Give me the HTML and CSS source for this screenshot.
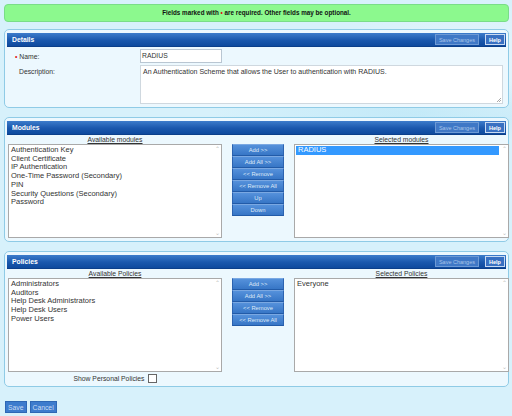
FILE: index.html
```html
<!DOCTYPE html>
<html>
<head>
<meta charset="utf-8">
<link rel="stylesheet" href="styles.css">
</head>
<body>
<div class="page">
  <div class="notice">Fields marked with <span class="req">•</span> are required. Other fields may be optional.</div>

  <div class="panel details">
    <div class="panel-head">
      <span class="title">Details</span>
      <span class="hbtn save">Save Changes</span>
      <span class="hbtn help">Help</span>
    </div>
    <div class="form-row name-row">
      <label class="flabel"><span class="req">•</span> Name:</label>
      <div class="input">RADIUS</div>
    </div>
    <div class="form-row desc-row">
      <label class="flabel">Description:</label>
      <div class="textarea">An Authentication Scheme that allows the User to authentication with RADIUS.<span class="grip"></span></div>
    </div>
  </div>

  <div class="panel modules">
    <div class="panel-head">
      <span class="title">Modules</span>
      <span class="hbtn save">Save Changes</span>
      <span class="hbtn help">Help</span>
    </div>
    <div class="picker">
      <div class="col">
        <div class="col-label">Available modules</div>
        <div class="listbox">
          <div class="items">
            <div>Authentication Key</div>
            <div>Client Certificate</div>
            <div>IP Authentication</div>
            <div>One-Time Password (Secondary)</div>
            <div>PIN</div>
            <div>Security Questions (Secondary)</div>
            <div>Password</div>
          </div>
          <div class="sbar"><span>&#8963;</span><span>&#8964;</span></div>
        </div>
      </div>
      <div class="btns">
        <div class="mbtn">Add &gt;&gt;</div>
        <div class="mbtn">Add All &gt;&gt;</div>
        <div class="mbtn">&lt;&lt; Remove</div>
        <div class="mbtn">&lt;&lt; Remove All</div>
        <div class="mbtn">Up</div>
        <div class="mbtn">Down</div>
      </div>
      <div class="col">
        <div class="col-label">Selected modules</div>
        <div class="listbox">
          <div class="items">
            <div class="sel">RADIUS</div>
          </div>
          <div class="sbar"><span>&#8963;</span><span>&#8964;</span></div>
        </div>
      </div>
    </div>
  </div>

  <div class="panel policies">
    <div class="panel-head">
      <span class="title">Policies</span>
      <span class="hbtn save">Save Changes</span>
      <span class="hbtn help">Help</span>
    </div>
    <div class="picker">
      <div class="col">
        <div class="col-label">Available Policies</div>
        <div class="listbox">
          <div class="items">
            <div>Administrators</div>
            <div>Auditors</div>
            <div>Help Desk Administrators</div>
            <div>Help Desk Users</div>
            <div>Power Users</div>
          </div>
          <div class="sbar"><span>&#8963;</span><span>&#8964;</span></div>
        </div>
        <div class="personal">Show Personal Policies <span class="check"></span></div>
      </div>
      <div class="btns">
        <div class="mbtn">Add &gt;&gt;</div>
        <div class="mbtn">Add All &gt;&gt;</div>
        <div class="mbtn">&lt;&lt; Remove</div>
        <div class="mbtn">&lt;&lt; Remove All</div>
      </div>
      <div class="col">
        <div class="col-label">Selected Policies</div>
        <div class="listbox">
          <div class="items">
            <div>Everyone</div>
          </div>
          <div class="sbar"><span>&#8963;</span><span>&#8964;</span></div>
        </div>
      </div>
    </div>
  </div>

  <div class="actions">
    <span class="abtn">Save</span>
    <span class="abtn">Cancel</span>
  </div>
</div>
</body>
</html>
```

FILE: styles.css
```css
html, body {
  margin: 0;
  padding: 0;
}
body {
  width: 512px;
  height: 416px;
  overflow: hidden;
  background: #d7f1fb;
  background-image:
    radial-gradient(ellipse 220px 90px at 470px 60px, rgba(255,255,255,0.35), rgba(255,255,255,0) 70%),
    radial-gradient(ellipse 260px 40px at 420px 112px, rgba(180,228,246,0.6), rgba(180,228,246,0) 80%);
  font-family: "Liberation Sans", Arial, sans-serif;
  color: #222;
}
.page {
  padding: 4px 3px 0 4px;
}
.notice {
  height: 16px;
  background: #8cf98e;
  border: 1px solid #79dd88;
  border-radius: 4px;
  font-size: 6.3px;
  font-weight: bold;
  line-height: 16px;
  text-align: center;
  color: #111;
}
.req {
  color: #e01010;
}
.panel {
  margin-top: 7px;
  background: #ecf8fe;
  border: 1px solid #8fcbe6;
  border-radius: 5px;
  padding: 3px 2px 3px 2px;
}
.panel-head {
  height: 13px;
  display: flex;
  align-items: center;
  gap: 6px;
  padding: 0 1px 0 5px;
  background: linear-gradient(#3c7ccb, #1a58ad 55%, #0e4a9e);
  border-bottom: 1px solid #0b3f8a;
}
.panel-head .title {
  flex: 1;
  color: #fff;
  font-weight: bold;
  font-size: 6.8px;
}
.hbtn {
  height: 11px;
  line-height: 10px;
  box-sizing: border-box;
  font-size: 5.5px;
  padding: 0 3px;
  border: 1px solid #6d9ad5;
  background: #3f78c6;
  color: #a9c4e8;
}
.hbtn.help {
  color: #fff;
  font-weight: bold;
  border-color: #c8daf2;
  background: #3870c2;
  padding: 0 2px;
  width: 20px;
  text-align: center;
}
.form-row {
  display: flex;
}
.flabel {
  font-size: 6.8px;
  color: #333;
}
.name-row {
  margin-top: 2px;
  align-items: center;
}
.name-row .flabel {
  padding-left: 8px;
  width: 125px;
}
.input {
  width: 79px;
  height: 12px;
  background: #fff;
  border: 1px solid #b9c6d2;
  font-size: 6.8px;
  line-height: 12px;
  padding-left: 1px;
  box-sizing: content-box;
  color: #333;
}
.desc-row {
  margin-top: 2px;
}
.desc-row .flabel {
  padding-left: 12px;
  width: 121px;
  padding-top: 3px;
}
.textarea {
  position: relative;
  flex: 1;
  height: 39px;
  box-sizing: border-box;
  margin-right: 3px;
  background: #fff;
  border: 1px solid #cfd8df;
  font-size: 7px;
  padding: 2px 2px;
  color: #333;
}
.grip {
  position: absolute;
  right: 1px;
  bottom: 1px;
  width: 4px;
  height: 4px;
  background: linear-gradient(135deg, transparent 50%, #aaa 50%, #aaa 60%, transparent 60%, transparent 75%, #aaa 75%, #aaa 85%, transparent 85%);
}
.modules {
  margin-top: 9px;
}
.policies {
  margin-top: 9px;
}
.picker {
  display: grid;
  grid-template-columns: 214px 52px 215px;
  column-gap: 10px;
  padding: 0 1px;
}
.col-label {
  text-align: center;
  font-size: 6.8px;
  text-decoration: underline;
  color: #333;
  height: 9px;
  line-height: 10px;
}
.listbox {
  display: flex;
  height: 92px;
  background: #fff;
  border: 1px solid #a9a9a9;
}
.items {
  flex: 1;
  padding: 1px 1px 0 2px;
  font-size: 7.5px;
  line-height: 8.7px;
  color: #333;
}
.items .sel {
  background: #3399ff;
  color: #fff;
  padding-left: 2px;
  margin-left: -1px;
}
.sbar {
  width: 8px;
  display: flex;
  flex-direction: column;
  justify-content: space-between;
  align-items: center;
  font-size: 6px;
  color: #bbb;
  line-height: 6px;
  padding: 1px 0;
}
.btns {
  padding-top: 9px;
  display: flex;
  flex-direction: column;
}
.mbtn {
  height: 12px;
  line-height: 11px;
  box-sizing: border-box;
  background: linear-gradient(#5591db, #3776c6);
  border-top: 1px solid #7aa8e2;
  border-bottom: 1px solid #225ba8;
  border-left: 1px solid #2c63b0;
  border-right: 1px solid #2c63b0;
  color: #dfeaf8;
  font-size: 5.8px;
  text-align: center;
}
.personal {
  font-size: 6.8px;
  color: #333;
  height: 10px;
  margin-top: 1px;
  display: flex;
  align-items: center;
  justify-content: center;
  gap: 3px;
}
.check {
  width: 7px;
  height: 7px;
  border: 1px solid #666;
  background: #fff;
  display: inline-block;
}
.actions {
  margin-top: 14px;
  display: flex;
  gap: 3px;
  padding-left: 1px;
}
.abtn {
  height: 12px;
  line-height: 11px;
  box-sizing: border-box;
  padding: 0 2px;
  background: #3d7ccd;
  border: 1px solid #2e67b4;
  color: #c9dbf3;
  font-size: 6.8px;
}
```
